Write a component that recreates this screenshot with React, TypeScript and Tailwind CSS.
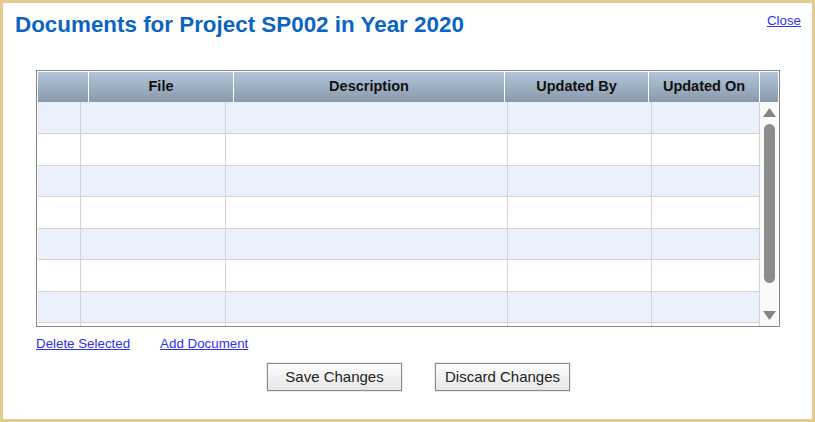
const headerCols = [
  { label: "", w: "w-[51px]" },
  { label: "File", w: "w-[145px]" },
  { label: "Description", w: "w-[271px]" },
  { label: "Updated By", w: "w-[144px]" },
  { label: "Updated On", w: "w-[111px]" },
];

const bodyCols = ["w-[43px]", "w-[145px]", "w-[282px]", "w-[144px]", "w-[108px]"];

const rowHeights = ["h-[32px]", "h-[32px]", "h-[31px]", "h-[32px]", "h-[31px]", "h-[32px]", "h-[31px]", "h-[32px]"];

function ScrollBar() {
  return (
    <div className="flex w-[18px] flex-col items-center bg-[#fafafa] pt-[6px]">
      <svg width="13" height="9" viewBox="0 0 13 9">
        <polygon points="6.5,0 13,9 0,9" fill="#858585" />
      </svg>
      <div className="mt-[7px] h-[159px] w-[11px] rounded-[6px] bg-[#8c8c8c]" />
      <svg className="mt-[28px]" width="13" height="9" viewBox="0 0 13 9">
        <polygon points="0,0 13,0 6.5,9" fill="#858585" />
      </svg>
    </div>
  );
}

export default function App() {
  return (
    <div className="h-[422px] w-[815px] border-[3px] border-[#e4ca8e] bg-white font-['Liberation_Sans',Arial,sans-serif]">
      <div className="flex items-start justify-between pl-[12px] pr-[11px] pt-[9px]">
        <h1 className="text-[22.4px] font-bold leading-[26px] text-[#0b64c4]">
          Documents for Project SP002 in Year 2020
        </h1>
        <a href="#" className="mt-[1px] text-[13.33px] leading-[16px] text-[#3333ee] underline">
          Close
        </a>
      </div>

      <div className="ml-[33px] mt-[32px] w-[744px] border border-[#858585] bg-white px-px pt-px">
        <div className="flex h-[30px] bg-gradient-to-b from-[#b3c6da] to-[#8999ab]">
          {headerCols.map((c, i) => (
            <div
              key={i}
              className={`${c.w} flex items-center justify-center border-r border-white text-[14.5px] font-bold text-[#111]`}
            >
              {c.label}
            </div>
          ))}
          <div className="w-[18px]" />
        </div>

        <div className="flex h-[224px]">
          <div className="w-[722px] overflow-hidden">
            {rowHeights.map((h, r) => (
              <div
                key={r}
                className={`flex ${h} border-b border-[#d3d3d3] ${r % 2 === 0 ? "bg-[#eaf0fb]" : "bg-white"}`}
              >
                {bodyCols.map((w, i) => (
                  <div key={i} className={`${w} border-r border-[#d3d3d3]`} />
                ))}
              </div>
            ))}
          </div>
          <ScrollBar />
        </div>
      </div>

      <div className="ml-[33px] mt-[9px] flex gap-[30px] text-[13.33px] leading-[16px] text-[#3030f0]">
        <a href="#" className="underline">Delete Selected</a>
        <a href="#" className="underline">Add Document</a>
      </div>

      <div className="ml-[264px] mt-[11px] flex gap-[33px]">
        <button className="h-[28px] w-[135px] border border-[#8a8a8a] bg-gradient-to-b from-[#fdfdfd] to-[#e6e6e6] text-[15px] text-[#222] shadow-[0_0_0_1px_#ebebeb]">
          Save Changes
        </button>
        <button className="h-[28px] w-[135px] border border-[#8a8a8a] bg-gradient-to-b from-[#fdfdfd] to-[#e6e6e6] text-[15px] text-[#222] shadow-[0_0_0_1px_#ebebeb]">
          Discard Changes
        </button>
      </div>
    </div>
  );
}
